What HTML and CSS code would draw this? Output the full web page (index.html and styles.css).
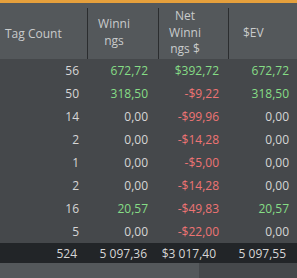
FILE: index.html
```html
<!DOCTYPE html>
<html>
<head>
<meta charset="utf-8">
<link rel="stylesheet" href="styles.css">
</head>
<body>
<div class="panel">
  <div class="topbar"></div>
  <div class="grid head">
    <div class="hcell c1"><span class="htxt">Tag Count</span></div>
    <div class="hcell c2"><span class="htxt narrow">Winni<br>ngs</span></div>
    <div class="hcell c3"><span class="htxt narrow">Net<br>Winni<br>ngs $</span></div>
    <div class="hcell c4"><span class="htxt ev">$EV</span></div>
  </div>
  <div class="rows">
    <div class="grid row"><span>56</span><span class="pos">672,72</span><span class="pos">$392,72</span><span class="pos">672,72</span></div>
    <div class="grid row"><span>50</span><span class="pos">318,50</span><span class="neg">-$9,22</span><span class="pos">318,50</span></div>
    <div class="grid row"><span>14</span><span>0,00</span><span class="neg">-$99,96</span><span>0,00</span></div>
    <div class="grid row"><span>2</span><span>0,00</span><span class="neg">-$14,28</span><span>0,00</span></div>
    <div class="grid row"><span>1</span><span>0,00</span><span class="neg">-$5,00</span><span>0,00</span></div>
    <div class="grid row"><span>2</span><span>0,00</span><span class="neg">-$14,28</span><span>0,00</span></div>
    <div class="grid row"><span>16</span><span class="pos">20,57</span><span class="neg">-$49,83</span><span class="pos">20,57</span></div>
    <div class="grid row"><span>5</span><span>0,00</span><span class="neg">-$22,00</span><span>0,00</span></div>
  </div>
  <div class="grid total"><span>524</span><span>5 097,36</span><span>$3 017,40</span><span>5 097,55</span></div>
  <div class="hscroll"><div class="thumb"></div></div>
</div>
</body>
</html>
```
FILE: styles.css
```css
html, body {
  margin: 0;
  padding: 0;
  background: #45484b;
}
.panel {
  width: 297px;
  height: 278px;
  overflow: hidden;
  font-family: "Open Sans", "Noto Sans", sans-serif;
  font-size: 12px;
  color: #d6d6d6;
  display: flex;
  flex-direction: column;
}
.topbar {
  height: 3px;
  background: #e6a03c;
}
.grid {
  display: grid;
  grid-template-columns: 87px 71px 70px 69px;
}
.head {
  height: 56px;
  background: #54585b;
  color: #c9cbcc;
}
.hcell {
  display: flex;
  align-items: center;
  padding-top: 3px;
  box-sizing: border-box;
}
.hcell.c2, .hcell.c3, .hcell.c4 {
  border-left: 1px solid #2b2d2f;
  margin-top: 5px;
  padding-top: 0;
  padding-bottom: 3px;
  margin-bottom: 1px;
}
.htxt {
  line-height: 16.5px;
}
.c1 .htxt {
  padding-left: 5px;
}
.narrow {
  width: 34px;
  margin-left: 9px;
  text-align: center;
}
.ev {
  margin-left: 14px;
}
.rows {
  background: #45484b;
}
.row {
  height: 23px;
  align-items: center;
  text-align: right;
}
.row span:nth-child(1) { padding-right: 8px; }
.row span:nth-child(2) { padding-right: 10px; }
.row span:nth-child(3) { padding-right: 9px; }
.row span:nth-child(4) { padding-right: 8px; }
.pos { color: #86dd86; }
.neg { color: #ee7474; }
.total {
  height: 20px;
  align-items: center;
  text-align: right;
  background: #222528;
  color: #d6d6d6;
}
.total span:nth-child(1) { padding-right: 10px; }
.total span:nth-child(2) { padding-right: 11px; }
.total span:nth-child(3) { padding-right: 12px; }
.total span:nth-child(4) { padding-right: 11px; }
.hscroll {
  flex: 1;
  background: #45484b;
  display: flex;
}
.thumb {
  width: 199px;
  background: #54585b;
}
```
